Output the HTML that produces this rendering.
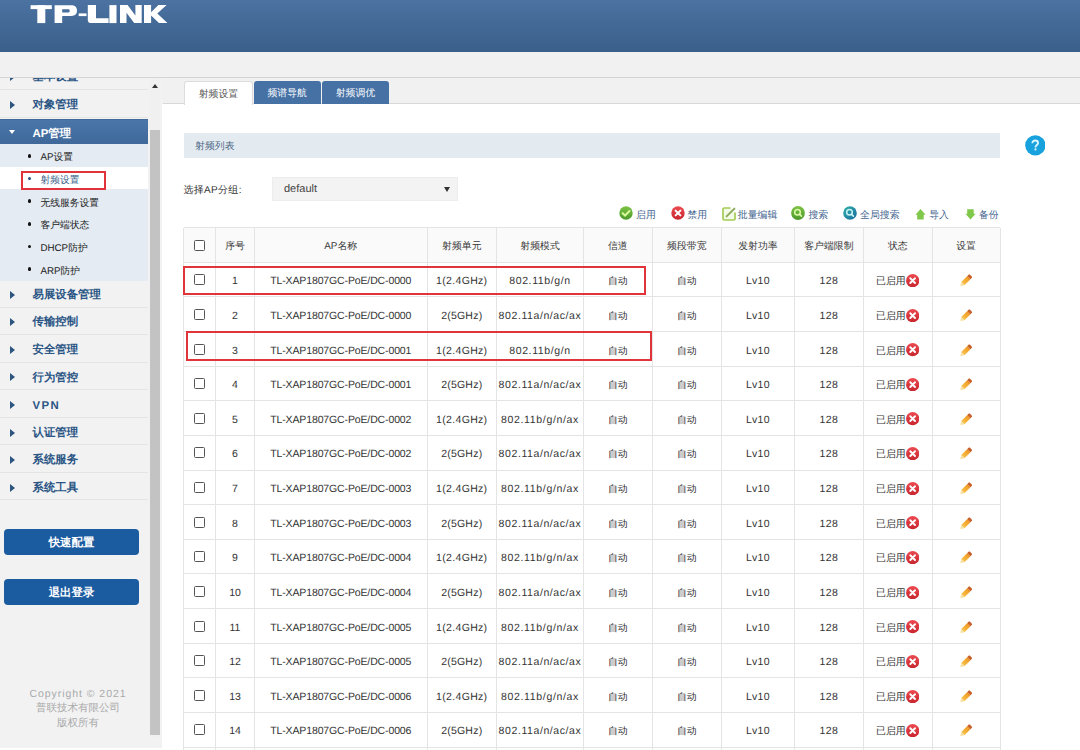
<!DOCTYPE html><html><head><meta charset="utf-8"><style>
*{margin:0;padding:0;box-sizing:border-box}
html,body{width:1080px;height:750px;overflow:hidden;background:#fff;font-family:"Liberation Sans",sans-serif;position:relative;text-rendering:geometricPrecision}
.abs{position:absolute}
#hdr{left:0;top:0;width:1080px;height:52px;background:linear-gradient(#4b72a1,#3a5f8a)}
#band{left:0;top:52px;width:1080px;height:26px;background:#f1f1f1;border-bottom:1px solid #d4d4d4}
#side{left:0;top:78px;width:163px;height:670px;background:#f2f2f3;overflow:hidden}
.mi{position:absolute;left:0;width:148px;height:27.6px;border-bottom:1px solid #e4e4e6;color:#2a5584;font-weight:bold;font-size:11.4px}
.mi .t{position:absolute;left:32.5px;top:50%;margin-top:1.5px;transform:translateY(-44%);white-space:nowrap}
.mi .tri{position:absolute;left:10px;top:50%;margin-top:-2.7px;width:0;height:0;border-left:5.2px solid #2c557f;border-top:4.2px solid transparent;border-bottom:4.2px solid transparent}
.mi.act{background:linear-gradient(#4a76aa,#3f6899);color:#fff;border-top:1px solid #41699a;border-bottom:none}
.mi.act .tri{left:8.5px;margin-top:-2px;border-top:4px solid #fff;border-left:3.7px solid transparent;border-right:3.7px solid transparent;border-bottom:none}
#sub{left:0;top:66px;width:148px;height:137px;background:#e4ebf2}
.si{position:absolute;left:0;width:148px;height:22.65px;font-size:9.75px;color:#222}
.si .b{position:absolute;left:27.8px;top:50%;margin-top:-1.3px;width:3.6px;height:3.6px;background:#111;border-radius:50%}
.si .t{position:absolute;left:40.5px;top:50%;margin-top:1px;transform:translateY(-41%);white-space:nowrap}
.si.cur{background:#fff;color:#3a5f8a}
.si.cur .b{background:#2a4f7a}
#sbtrack{left:150px;top:0;width:10px;height:660px;background:#f0f0f0}
#sbthumb{left:150px;top:51.5px;width:10px;height:605.5px;background:#c3c3c3}
#sbup{left:152px;top:5.5px;width:0;height:0;border-bottom:4px solid #333;border-left:3.5px solid transparent;border-right:3.5px solid transparent}
.btn{position:absolute;left:4px;width:135px;height:25.6px;background:#1b5b9f;border-radius:4px;color:#fff;font-weight:bold;font-size:11.4px;text-align:center;line-height:25.6px;padding-top:1.8px}
#copy{left:0;top:608px;width:156px;text-align:center;color:#a9a9a9;font-size:10.5px;line-height:15px}
#copy .en{letter-spacing:0.95px;position:relative;top:1px}
#tabbar{left:163px;top:78px;width:917px;height:25.5px;background:#f1f1f1;border-bottom:1px solid #d8d8d8}
.tab{position:absolute;top:81px;height:22.5px;border-radius:3px 3px 0 0;font-size:9.9px;text-align:center;line-height:25px;color:#fff;background:#4571a5}
.tab.on{background:#fff;color:#555;border:1px solid #dcdcdc;border-bottom:none;height:23.5px}
#content{left:162px;top:103.5px;width:918px;height:647px;background:#fff}
#sec{left:183.5px;top:132.7px;width:816.5px;height:25.6px;background:#e3ebf1;color:#4d6785;font-size:9.9px;line-height:27.6px;padding-left:11.5px}
#lbl{left:183.5px;top:183px;font-size:10px;letter-spacing:0.3px;color:#333}
#sel{left:272px;top:177.4px;width:186.4px;height:24.1px;background:#f3f3f3;border:1px solid #ededed}
#sel .t{position:absolute;left:11px;top:5px;font-size:11px;color:#444}
#sel .arr{position:absolute;left:170.5px;top:9px;width:0;height:0;border-top:5.5px solid #333;border-left:3.6px solid transparent;border-right:3.6px solid transparent}
.tb{position:absolute;top:207.8px;font-size:9.9px;color:#44658f;white-space:nowrap}
#help{left:1024.7px;top:134.9px;width:20.7px;height:20.7px;border-radius:50%;background:#1b9ad8;color:#fff;font-weight:bold;font-size:14px;text-align:center;line-height:21px}
.hl{position:absolute;background:#e4e4e4;height:1px}
.vl{position:absolute;background:#e4e4e4;width:1px}
.cell{position:absolute;text-align:center;white-space:nowrap;font-size:10.5px;color:#333;padding-top:2px}
.hc{font-size:9.9px;color:#383838;padding-top:2.8px}
.zh{font-size:9.9px}
.cb{position:absolute;width:11px;height:11px;border:1.4px solid #555;border-radius:1.5px;background:#fff}
.red{position:absolute;border:2px solid #e0343a}
</style></head><body>
<div id="hdr" class="abs"></div>
<svg class="abs" style="left:0;top:0" width="200" height="30" viewBox="0 0 200 30"><g fill="#fff"><rect x="30.6" y="5.2" width="21.2" height="3.9"/><rect x="37.3" y="5.2" width="8" height="17.9"/><path fill-rule="evenodd" d="M54.6 5.2H71.5C75.2 5.2 77 7.3 77 10.6C77 13.9 75.2 16 71.5 16H62.2V23.1H54.6ZM62.2 9.2V12.5H68.3C69.3 12.5 69.7 11.9 69.7 10.85C69.7 9.8 69.3 9.2 68.3 9.2Z"/><rect x="78.7" y="13.4" width="7.8" height="2.7"/><path d="M87.8 5.1H96V18.3H108.6V23.1H91C89 23.1 87.8 22 87.8 20Z"/><rect x="109.4" y="5.1" width="7.1" height="18"/><path d="M120 5.1H127.6L135.4 15.5V5.1H141.7V23.1H134.2L126.5 12.8V23.1H120Z"/><path d="M144 5.1H151.1V12.2L158.4 5.1H166.6L157.3 13.6L167.4 23.1H159L151.1 15.6V23.1H144Z"/></g></svg>
<div id="band" class="abs"></div>
<div id="side" class="abs">
<div class="mi" style="top:-15.5px"><span class="tri"></span><span class="t">基本设置</span></div>
<div class="mi" style="top:12.5px"><span class="tri"></span><span class="t">对象管理</span></div>
<div class="mi act" style="top:40.8px;height:26px"><span class="tri"></span><span class="t">AP管理</span></div>
<div id="sub" class="abs">
<div class="si" style="top:0.0px"><span class="b"></span><span class="t">AP设置</span></div>
<div class="si cur" style="top:22.6px"><span class="b"></span><span class="t">射频设置</span></div>
<div class="si" style="top:45.3px"><span class="b"></span><span class="t">无线服务设置</span></div>
<div class="si" style="top:67.9px"><span class="b"></span><span class="t">客户端状态</span></div>
<div class="si" style="top:90.6px"><span class="b"></span><span class="t">DHCP防护</span></div>
<div class="si" style="top:113.2px"><span class="b"></span><span class="t">ARP防护</span></div>
</div>
<div class="mi" style="top:202.2px"><span class="tri"></span><span class="t">易展设备管理</span></div>
<div class="mi" style="top:229.7px"><span class="tri"></span><span class="t">传输控制</span></div>
<div class="mi" style="top:257.3px"><span class="tri"></span><span class="t">安全管理</span></div>
<div class="mi" style="top:284.8px"><span class="tri"></span><span class="t">行为管控</span></div>
<div class="mi" style="top:312.3px"><span class="tri"></span><span class="t"><span style="letter-spacing:1.4px">VPN</span></span></div>
<div class="mi" style="top:339.9px"><span class="tri"></span><span class="t">认证管理</span></div>
<div class="mi" style="top:367.4px"><span class="tri"></span><span class="t">系统服务</span></div>
<div class="mi" style="top:394.9px"><span class="tri"></span><span class="t">系统工具</span></div>
<div class="btn" style="top:451.4px">快速配置</div>
<div class="btn" style="top:501.4px">退出登录</div>
<div id="copy" class="abs"><span class="en">Copyright © 2021</span><br>普联技术有限公司<br>版权所有</div>
<div id="sbtrack" class="abs"></div><div id="sbthumb" class="abs"></div><div id="sbup" class="abs"></div>
</div>
<div class="red" style="left:20.6px;top:171px;width:85.8px;height:19.3px"></div>
<div id="tabbar" class="abs"></div>
<div id="content" class="abs"></div>
<div class="tab on" style="left:183.9px;width:69px">射频设置</div>
<div class="tab" style="left:253.9px;width:66.7px">频谱导航</div>
<div class="tab" style="left:322px;width:66.8px">射频调优</div>
<div id="sec" class="abs">射频列表</div>
<div id="lbl" class="abs">选择AP分组:</div>
<div id="sel" class="abs"><span class="t">default</span><span class="arr"></span></div>
<svg class="abs" style="left:1024.7px;top:134.9px" width="20.7" height="20.7" viewBox="0 0 20.7 20.7"><circle cx="10.35" cy="10.35" r="10.2" fill="#18a2dd"/><path d="M7.4 8.2C7.4 6.4 8.6 5.5 10.2 5.5C11.9 5.5 13.1 6.5 13.1 8C13.1 9.9 10.5 10.2 10.5 12.2V12.6" stroke="#d8f4ff" stroke-width="1.9" fill="none"/><circle cx="10.5" cy="14.4" r="1.1" fill="#d8f4ff"/></svg>
<svg class="abs" width="0" height="0" style="left:0;top:0"><defs><linearGradient id="gG" x1="0" y1="0" x2="0" y2="1"><stop offset="0" stop-color="#7cc243"/><stop offset="1" stop-color="#4c9a2c"/></linearGradient><linearGradient id="gR" x1="0" y1="0" x2="0" y2="1"><stop offset="0" stop-color="#ec4a50"/><stop offset="1" stop-color="#c8262e"/></linearGradient><linearGradient id="gB" x1="0" y1="0" x2="1" y2="1"><stop offset="0" stop-color="#2fb0a8"/><stop offset="1" stop-color="#1a6aa0"/></linearGradient><linearGradient id="gP" x1="0" y1="1" x2="1" y2="0"><stop offset="0" stop-color="#f9d25a"/><stop offset="0.7" stop-color="#f2a22a"/><stop offset="1" stop-color="#d5702a"/></linearGradient></defs></svg>
<svg class="abs" style="left:618.6px;top:206px" width="14" height="14" viewBox="0 0 14 14"><circle cx="7" cy="7" r="6.7" fill="url(#gG)"/><path d="M3.6 7.2l2.5 2.4 4.4-4.6" stroke="#d6f79a" stroke-width="2.1" fill="none" stroke-linecap="round"/></svg>
<svg class="abs" style="left:670.6px;top:205.8px" width="14" height="14" viewBox="0 0 14 14"><circle cx="7" cy="7" r="6.7" fill="url(#gR)"/><path d="M4.6 4.6l4.8 4.8M9.4 4.6l-4.8 4.8" stroke="#fff" stroke-width="2" fill="none" stroke-linecap="round"/></svg>
<svg class="abs" style="left:721.5px;top:206.8px" width="14" height="14" viewBox="0 0 14 14"><path d="M8.5 1H2.2C1.5 1 1 1.5 1 2.2V11.8C1 12.5 1.5 13 2.2 13H11.8C12.5 13 13 12.5 13 11.8V5.5" stroke="#a3cc55" stroke-width="1.7" fill="#f3fae6"/><path d="M4.6 9.4L12.4 1.6" stroke="#8aa85a" stroke-width="1.9" stroke-linecap="round"/></svg>
<svg class="abs" style="left:790.8px;top:205.5px" width="14" height="14" viewBox="0 0 14 14"><circle cx="7" cy="7" r="6.9" fill="url(#gG)"/><circle cx="6.5" cy="6.2" r="2.8" stroke="#dcf8a8" stroke-width="1.5" fill="none"/><path d="M8.4 8.2l2 2" stroke="#dcf8a8" stroke-width="1.7" stroke-linecap="round"/></svg>
<svg class="abs" style="left:842.5px;top:205.6px" width="14" height="14" viewBox="0 0 14 14"><circle cx="7" cy="7" r="6.8" fill="url(#gB)"/><circle cx="6.5" cy="6.2" r="2.8" stroke="#c8f4f4" stroke-width="1.5" fill="none"/><path d="M8.4 8.2l2 2" stroke="#c8f4f4" stroke-width="1.7" stroke-linecap="round"/></svg>
<svg class="abs" style="left:914.8px;top:208.5px" width="11" height="11" viewBox="0 0 11 11"><path d="M5.5 0.1L10.6 5.8H8.7V10.4H2.2V5.8H0.5z" fill="#80c84a"/></svg>
<svg class="abs" style="left:964.5px;top:208.6px" width="11" height="11" viewBox="0 0 11 11"><path d="M5.5 10.5L10.6 4.8H8.7V0.2H2.2V4.8H0.5z" fill="#80c84a"/></svg>
<div class="tb" style="left:636.0px">启用</div>
<div class="tb" style="left:687.4px">禁用</div>
<div class="tb" style="left:737.8px">批量编辑</div>
<div class="tb" style="left:808.4px">搜索</div>
<div class="tb" style="left:860.0px">全局搜索</div>
<div class="tb" style="left:929.2px">导入</div>
<div class="tb" style="left:978.9px">备份</div>
<div class="abs" style="left:183.5px;top:227.5px;width:816.5px;height:34.7px;background:#fafafa"></div>
<div class="hl" style="left:183.5px;top:227.0px;width:816.5px"></div>
<div class="hl" style="left:183.5px;top:261.7px;width:816.5px"></div>
<div class="hl" style="left:183.5px;top:296.3px;width:816.5px"></div>
<div class="hl" style="left:183.5px;top:331.0px;width:816.5px"></div>
<div class="hl" style="left:183.5px;top:365.6px;width:816.5px"></div>
<div class="hl" style="left:183.5px;top:400.2px;width:816.5px"></div>
<div class="hl" style="left:183.5px;top:434.9px;width:816.5px"></div>
<div class="hl" style="left:183.5px;top:469.5px;width:816.5px"></div>
<div class="hl" style="left:183.5px;top:504.1px;width:816.5px"></div>
<div class="hl" style="left:183.5px;top:538.7px;width:816.5px"></div>
<div class="hl" style="left:183.5px;top:573.4px;width:816.5px"></div>
<div class="hl" style="left:183.5px;top:608.0px;width:816.5px"></div>
<div class="hl" style="left:183.5px;top:642.6px;width:816.5px"></div>
<div class="hl" style="left:183.5px;top:677.3px;width:816.5px"></div>
<div class="hl" style="left:183.5px;top:711.9px;width:816.5px"></div>
<div class="hl" style="left:183.5px;top:746.5px;width:816.5px"></div>
<div class="vl" style="left:183.0px;top:227.5px;height:524.5px"></div>
<div class="vl" style="left:215.0px;top:227.5px;height:524.5px"></div>
<div class="vl" style="left:254.0px;top:227.5px;height:524.5px"></div>
<div class="vl" style="left:426.5px;top:227.5px;height:524.5px"></div>
<div class="vl" style="left:496.0px;top:227.5px;height:524.5px"></div>
<div class="vl" style="left:583.0px;top:227.5px;height:524.5px"></div>
<div class="vl" style="left:651.5px;top:227.5px;height:524.5px"></div>
<div class="vl" style="left:721.0px;top:227.5px;height:524.5px"></div>
<div class="vl" style="left:793.8px;top:227.5px;height:524.5px"></div>
<div class="vl" style="left:863.0px;top:227.5px;height:524.5px"></div>
<div class="vl" style="left:931.5px;top:227.5px;height:524.5px"></div>
<div class="vl" style="left:999.5px;top:227.5px;height:524.5px"></div>
<div class="cb" style="left:194.0px;top:239.5px"></div>
<div class="cell hc" style="left:215.5px;top:227.5px;width:39.0px;height:34.7px;line-height:34.7px">序号</div>
<div class="cell hc" style="left:254.5px;top:227.5px;width:172.5px;height:34.7px;line-height:34.7px">AP名称</div>
<div class="cell hc" style="left:427.0px;top:227.5px;width:69.5px;height:34.7px;line-height:34.7px">射频单元</div>
<div class="cell hc" style="left:496.5px;top:227.5px;width:87.0px;height:34.7px;line-height:34.7px">射频模式</div>
<div class="cell hc" style="left:583.5px;top:227.5px;width:68.5px;height:34.7px;line-height:34.7px">信道</div>
<div class="cell hc" style="left:652.0px;top:227.5px;width:69.5px;height:34.7px;line-height:34.7px">频段带宽</div>
<div class="cell hc" style="left:721.5px;top:227.5px;width:72.8px;height:34.7px;line-height:34.7px">发射功率</div>
<div class="cell hc" style="left:794.3px;top:227.5px;width:69.2px;height:34.7px;line-height:34.7px">客户端限制</div>
<div class="cell hc" style="left:863.5px;top:227.5px;width:68.5px;height:34.7px;line-height:34.7px">状态</div>
<div class="cell hc" style="left:932.0px;top:227.5px;width:68.0px;height:34.7px;line-height:34.7px">设置</div>
<div class="cb" style="left:194.0px;top:274.2px"></div>
<div class="cell" style="left:215.5px;top:262.2px;width:39.0px;height:34.6px;line-height:34.6px">1</div>
<div class="cell" style="left:254.5px;top:262.2px;width:172.5px;height:34.6px;line-height:34.6px"><span style="letter-spacing:-0.13px">TL-XAP1807GC-PoE/DC-0000</span></div>
<div class="cell" style="left:427.0px;top:262.2px;width:69.5px;height:34.6px;line-height:34.6px"><span style="letter-spacing:0.33px">1(2.4GHz)</span></div>
<div class="cell" style="left:496.5px;top:262.2px;width:87.0px;height:34.6px;line-height:34.6px"><span style="letter-spacing:0.63px">802.11b/g/n</span></div>
<div class="cell" style="left:583.5px;top:262.2px;width:68.5px;height:34.6px;line-height:34.6px"><span class="zh">自动</span></div>
<div class="cell" style="left:652.0px;top:262.2px;width:69.5px;height:34.6px;line-height:34.6px"><span class="zh">自动</span></div>
<div class="cell" style="left:721.5px;top:262.2px;width:72.8px;height:34.6px;line-height:34.6px"><span style="letter-spacing:0.27px">Lv10</span></div>
<div class="cell" style="left:794.3px;top:262.2px;width:69.2px;height:34.6px;line-height:34.6px"><span style="letter-spacing:0.40px">128</span></div>
<div class="cell" style="left:863.5px;top:262.2px;width:68.5px;height:34.6px;line-height:34.6px"><span class="zh">已启用</span><svg width="13.3" height="13.3" viewBox="0 0 14 14" style="vertical-align:-3px;margin-left:0.5px"><circle cx="7" cy="7" r="7" fill="url(#gR)"/><path d="M4.5 4.5l5 5M9.5 4.5l-5 5" stroke="#fff" stroke-width="2" stroke-linecap="round"/></svg></div>
<div class="cell" style="left:932.0px;top:262.2px;width:68.0px;height:34.6px;line-height:34.6px"><svg width="13" height="13" viewBox="0 0 13 13" style="vertical-align:-3px;margin-left:-2px"><path d="M1.5 11.8l1-4 5.8-5.8 3.2 3.2-5.8 5.8z" fill="url(#gP)"/><path d="M8.3 2l1.2-1.2c0.5-0.5 1.1-0.5 1.6 0l1.6 1.6c0.5 0.5 0.5 1.1 0 1.6l-1.2 1.2z" fill="#c8602a"/><path d="M1.5 11.8l1-4 3 3z" fill="#f8e0a8"/></svg></div>
<div class="cb" style="left:194.0px;top:308.8px"></div>
<div class="cell" style="left:215.5px;top:296.8px;width:39.0px;height:34.6px;line-height:34.6px">2</div>
<div class="cell" style="left:254.5px;top:296.8px;width:172.5px;height:34.6px;line-height:34.6px"><span style="letter-spacing:-0.13px">TL-XAP1807GC-PoE/DC-0000</span></div>
<div class="cell" style="left:427.0px;top:296.8px;width:69.5px;height:34.6px;line-height:34.6px"><span style="letter-spacing:0.22px">2(5GHz)</span></div>
<div class="cell" style="left:496.5px;top:296.8px;width:87.0px;height:34.6px;line-height:34.6px"><span style="letter-spacing:0.59px">802.11a/n/ac/ax</span></div>
<div class="cell" style="left:583.5px;top:296.8px;width:68.5px;height:34.6px;line-height:34.6px"><span class="zh">自动</span></div>
<div class="cell" style="left:652.0px;top:296.8px;width:69.5px;height:34.6px;line-height:34.6px"><span class="zh">自动</span></div>
<div class="cell" style="left:721.5px;top:296.8px;width:72.8px;height:34.6px;line-height:34.6px"><span style="letter-spacing:0.27px">Lv10</span></div>
<div class="cell" style="left:794.3px;top:296.8px;width:69.2px;height:34.6px;line-height:34.6px"><span style="letter-spacing:0.40px">128</span></div>
<div class="cell" style="left:863.5px;top:296.8px;width:68.5px;height:34.6px;line-height:34.6px"><span class="zh">已启用</span><svg width="13.3" height="13.3" viewBox="0 0 14 14" style="vertical-align:-3px;margin-left:0.5px"><circle cx="7" cy="7" r="7" fill="url(#gR)"/><path d="M4.5 4.5l5 5M9.5 4.5l-5 5" stroke="#fff" stroke-width="2" stroke-linecap="round"/></svg></div>
<div class="cell" style="left:932.0px;top:296.8px;width:68.0px;height:34.6px;line-height:34.6px"><svg width="13" height="13" viewBox="0 0 13 13" style="vertical-align:-3px;margin-left:-2px"><path d="M1.5 11.8l1-4 5.8-5.8 3.2 3.2-5.8 5.8z" fill="url(#gP)"/><path d="M8.3 2l1.2-1.2c0.5-0.5 1.1-0.5 1.6 0l1.6 1.6c0.5 0.5 0.5 1.1 0 1.6l-1.2 1.2z" fill="#c8602a"/><path d="M1.5 11.8l1-4 3 3z" fill="#f8e0a8"/></svg></div>
<div class="cb" style="left:194.0px;top:343.5px"></div>
<div class="cell" style="left:215.5px;top:331.5px;width:39.0px;height:34.6px;line-height:34.6px">3</div>
<div class="cell" style="left:254.5px;top:331.5px;width:172.5px;height:34.6px;line-height:34.6px"><span style="letter-spacing:-0.13px">TL-XAP1807GC-PoE/DC-0001</span></div>
<div class="cell" style="left:427.0px;top:331.5px;width:69.5px;height:34.6px;line-height:34.6px"><span style="letter-spacing:0.33px">1(2.4GHz)</span></div>
<div class="cell" style="left:496.5px;top:331.5px;width:87.0px;height:34.6px;line-height:34.6px"><span style="letter-spacing:0.63px">802.11b/g/n</span></div>
<div class="cell" style="left:583.5px;top:331.5px;width:68.5px;height:34.6px;line-height:34.6px"><span class="zh">自动</span></div>
<div class="cell" style="left:652.0px;top:331.5px;width:69.5px;height:34.6px;line-height:34.6px"><span class="zh">自动</span></div>
<div class="cell" style="left:721.5px;top:331.5px;width:72.8px;height:34.6px;line-height:34.6px"><span style="letter-spacing:0.27px">Lv10</span></div>
<div class="cell" style="left:794.3px;top:331.5px;width:69.2px;height:34.6px;line-height:34.6px"><span style="letter-spacing:0.40px">128</span></div>
<div class="cell" style="left:863.5px;top:331.5px;width:68.5px;height:34.6px;line-height:34.6px"><span class="zh">已启用</span><svg width="13.3" height="13.3" viewBox="0 0 14 14" style="vertical-align:-3px;margin-left:0.5px"><circle cx="7" cy="7" r="7" fill="url(#gR)"/><path d="M4.5 4.5l5 5M9.5 4.5l-5 5" stroke="#fff" stroke-width="2" stroke-linecap="round"/></svg></div>
<div class="cell" style="left:932.0px;top:331.5px;width:68.0px;height:34.6px;line-height:34.6px"><svg width="13" height="13" viewBox="0 0 13 13" style="vertical-align:-3px;margin-left:-2px"><path d="M1.5 11.8l1-4 5.8-5.8 3.2 3.2-5.8 5.8z" fill="url(#gP)"/><path d="M8.3 2l1.2-1.2c0.5-0.5 1.1-0.5 1.6 0l1.6 1.6c0.5 0.5 0.5 1.1 0 1.6l-1.2 1.2z" fill="#c8602a"/><path d="M1.5 11.8l1-4 3 3z" fill="#f8e0a8"/></svg></div>
<div class="cb" style="left:194.0px;top:378.1px"></div>
<div class="cell" style="left:215.5px;top:366.1px;width:39.0px;height:34.6px;line-height:34.6px">4</div>
<div class="cell" style="left:254.5px;top:366.1px;width:172.5px;height:34.6px;line-height:34.6px"><span style="letter-spacing:-0.13px">TL-XAP1807GC-PoE/DC-0001</span></div>
<div class="cell" style="left:427.0px;top:366.1px;width:69.5px;height:34.6px;line-height:34.6px"><span style="letter-spacing:0.22px">2(5GHz)</span></div>
<div class="cell" style="left:496.5px;top:366.1px;width:87.0px;height:34.6px;line-height:34.6px"><span style="letter-spacing:0.59px">802.11a/n/ac/ax</span></div>
<div class="cell" style="left:583.5px;top:366.1px;width:68.5px;height:34.6px;line-height:34.6px"><span class="zh">自动</span></div>
<div class="cell" style="left:652.0px;top:366.1px;width:69.5px;height:34.6px;line-height:34.6px"><span class="zh">自动</span></div>
<div class="cell" style="left:721.5px;top:366.1px;width:72.8px;height:34.6px;line-height:34.6px"><span style="letter-spacing:0.27px">Lv10</span></div>
<div class="cell" style="left:794.3px;top:366.1px;width:69.2px;height:34.6px;line-height:34.6px"><span style="letter-spacing:0.40px">128</span></div>
<div class="cell" style="left:863.5px;top:366.1px;width:68.5px;height:34.6px;line-height:34.6px"><span class="zh">已启用</span><svg width="13.3" height="13.3" viewBox="0 0 14 14" style="vertical-align:-3px;margin-left:0.5px"><circle cx="7" cy="7" r="7" fill="url(#gR)"/><path d="M4.5 4.5l5 5M9.5 4.5l-5 5" stroke="#fff" stroke-width="2" stroke-linecap="round"/></svg></div>
<div class="cell" style="left:932.0px;top:366.1px;width:68.0px;height:34.6px;line-height:34.6px"><svg width="13" height="13" viewBox="0 0 13 13" style="vertical-align:-3px;margin-left:-2px"><path d="M1.5 11.8l1-4 5.8-5.8 3.2 3.2-5.8 5.8z" fill="url(#gP)"/><path d="M8.3 2l1.2-1.2c0.5-0.5 1.1-0.5 1.6 0l1.6 1.6c0.5 0.5 0.5 1.1 0 1.6l-1.2 1.2z" fill="#c8602a"/><path d="M1.5 11.8l1-4 3 3z" fill="#f8e0a8"/></svg></div>
<div class="cb" style="left:194.0px;top:412.7px"></div>
<div class="cell" style="left:215.5px;top:400.7px;width:39.0px;height:34.6px;line-height:34.6px">5</div>
<div class="cell" style="left:254.5px;top:400.7px;width:172.5px;height:34.6px;line-height:34.6px"><span style="letter-spacing:-0.13px">TL-XAP1807GC-PoE/DC-0002</span></div>
<div class="cell" style="left:427.0px;top:400.7px;width:69.5px;height:34.6px;line-height:34.6px"><span style="letter-spacing:0.33px">1(2.4GHz)</span></div>
<div class="cell" style="left:496.5px;top:400.7px;width:87.0px;height:34.6px;line-height:34.6px"><span style="letter-spacing:0.66px">802.11b/g/n/ax</span></div>
<div class="cell" style="left:583.5px;top:400.7px;width:68.5px;height:34.6px;line-height:34.6px"><span class="zh">自动</span></div>
<div class="cell" style="left:652.0px;top:400.7px;width:69.5px;height:34.6px;line-height:34.6px"><span class="zh">自动</span></div>
<div class="cell" style="left:721.5px;top:400.7px;width:72.8px;height:34.6px;line-height:34.6px"><span style="letter-spacing:0.27px">Lv10</span></div>
<div class="cell" style="left:794.3px;top:400.7px;width:69.2px;height:34.6px;line-height:34.6px"><span style="letter-spacing:0.40px">128</span></div>
<div class="cell" style="left:863.5px;top:400.7px;width:68.5px;height:34.6px;line-height:34.6px"><span class="zh">已启用</span><svg width="13.3" height="13.3" viewBox="0 0 14 14" style="vertical-align:-3px;margin-left:0.5px"><circle cx="7" cy="7" r="7" fill="url(#gR)"/><path d="M4.5 4.5l5 5M9.5 4.5l-5 5" stroke="#fff" stroke-width="2" stroke-linecap="round"/></svg></div>
<div class="cell" style="left:932.0px;top:400.7px;width:68.0px;height:34.6px;line-height:34.6px"><svg width="13" height="13" viewBox="0 0 13 13" style="vertical-align:-3px;margin-left:-2px"><path d="M1.5 11.8l1-4 5.8-5.8 3.2 3.2-5.8 5.8z" fill="url(#gP)"/><path d="M8.3 2l1.2-1.2c0.5-0.5 1.1-0.5 1.6 0l1.6 1.6c0.5 0.5 0.5 1.1 0 1.6l-1.2 1.2z" fill="#c8602a"/><path d="M1.5 11.8l1-4 3 3z" fill="#f8e0a8"/></svg></div>
<div class="cb" style="left:194.0px;top:447.4px"></div>
<div class="cell" style="left:215.5px;top:435.4px;width:39.0px;height:34.6px;line-height:34.6px">6</div>
<div class="cell" style="left:254.5px;top:435.4px;width:172.5px;height:34.6px;line-height:34.6px"><span style="letter-spacing:-0.13px">TL-XAP1807GC-PoE/DC-0002</span></div>
<div class="cell" style="left:427.0px;top:435.4px;width:69.5px;height:34.6px;line-height:34.6px"><span style="letter-spacing:0.22px">2(5GHz)</span></div>
<div class="cell" style="left:496.5px;top:435.4px;width:87.0px;height:34.6px;line-height:34.6px"><span style="letter-spacing:0.59px">802.11a/n/ac/ax</span></div>
<div class="cell" style="left:583.5px;top:435.4px;width:68.5px;height:34.6px;line-height:34.6px"><span class="zh">自动</span></div>
<div class="cell" style="left:652.0px;top:435.4px;width:69.5px;height:34.6px;line-height:34.6px"><span class="zh">自动</span></div>
<div class="cell" style="left:721.5px;top:435.4px;width:72.8px;height:34.6px;line-height:34.6px"><span style="letter-spacing:0.27px">Lv10</span></div>
<div class="cell" style="left:794.3px;top:435.4px;width:69.2px;height:34.6px;line-height:34.6px"><span style="letter-spacing:0.40px">128</span></div>
<div class="cell" style="left:863.5px;top:435.4px;width:68.5px;height:34.6px;line-height:34.6px"><span class="zh">已启用</span><svg width="13.3" height="13.3" viewBox="0 0 14 14" style="vertical-align:-3px;margin-left:0.5px"><circle cx="7" cy="7" r="7" fill="url(#gR)"/><path d="M4.5 4.5l5 5M9.5 4.5l-5 5" stroke="#fff" stroke-width="2" stroke-linecap="round"/></svg></div>
<div class="cell" style="left:932.0px;top:435.4px;width:68.0px;height:34.6px;line-height:34.6px"><svg width="13" height="13" viewBox="0 0 13 13" style="vertical-align:-3px;margin-left:-2px"><path d="M1.5 11.8l1-4 5.8-5.8 3.2 3.2-5.8 5.8z" fill="url(#gP)"/><path d="M8.3 2l1.2-1.2c0.5-0.5 1.1-0.5 1.6 0l1.6 1.6c0.5 0.5 0.5 1.1 0 1.6l-1.2 1.2z" fill="#c8602a"/><path d="M1.5 11.8l1-4 3 3z" fill="#f8e0a8"/></svg></div>
<div class="cb" style="left:194.0px;top:482.0px"></div>
<div class="cell" style="left:215.5px;top:470.0px;width:39.0px;height:34.6px;line-height:34.6px">7</div>
<div class="cell" style="left:254.5px;top:470.0px;width:172.5px;height:34.6px;line-height:34.6px"><span style="letter-spacing:-0.13px">TL-XAP1807GC-PoE/DC-0003</span></div>
<div class="cell" style="left:427.0px;top:470.0px;width:69.5px;height:34.6px;line-height:34.6px"><span style="letter-spacing:0.33px">1(2.4GHz)</span></div>
<div class="cell" style="left:496.5px;top:470.0px;width:87.0px;height:34.6px;line-height:34.6px"><span style="letter-spacing:0.66px">802.11b/g/n/ax</span></div>
<div class="cell" style="left:583.5px;top:470.0px;width:68.5px;height:34.6px;line-height:34.6px"><span class="zh">自动</span></div>
<div class="cell" style="left:652.0px;top:470.0px;width:69.5px;height:34.6px;line-height:34.6px"><span class="zh">自动</span></div>
<div class="cell" style="left:721.5px;top:470.0px;width:72.8px;height:34.6px;line-height:34.6px"><span style="letter-spacing:0.27px">Lv10</span></div>
<div class="cell" style="left:794.3px;top:470.0px;width:69.2px;height:34.6px;line-height:34.6px"><span style="letter-spacing:0.40px">128</span></div>
<div class="cell" style="left:863.5px;top:470.0px;width:68.5px;height:34.6px;line-height:34.6px"><span class="zh">已启用</span><svg width="13.3" height="13.3" viewBox="0 0 14 14" style="vertical-align:-3px;margin-left:0.5px"><circle cx="7" cy="7" r="7" fill="url(#gR)"/><path d="M4.5 4.5l5 5M9.5 4.5l-5 5" stroke="#fff" stroke-width="2" stroke-linecap="round"/></svg></div>
<div class="cell" style="left:932.0px;top:470.0px;width:68.0px;height:34.6px;line-height:34.6px"><svg width="13" height="13" viewBox="0 0 13 13" style="vertical-align:-3px;margin-left:-2px"><path d="M1.5 11.8l1-4 5.8-5.8 3.2 3.2-5.8 5.8z" fill="url(#gP)"/><path d="M8.3 2l1.2-1.2c0.5-0.5 1.1-0.5 1.6 0l1.6 1.6c0.5 0.5 0.5 1.1 0 1.6l-1.2 1.2z" fill="#c8602a"/><path d="M1.5 11.8l1-4 3 3z" fill="#f8e0a8"/></svg></div>
<div class="cb" style="left:194.0px;top:516.6px"></div>
<div class="cell" style="left:215.5px;top:504.6px;width:39.0px;height:34.6px;line-height:34.6px">8</div>
<div class="cell" style="left:254.5px;top:504.6px;width:172.5px;height:34.6px;line-height:34.6px"><span style="letter-spacing:-0.13px">TL-XAP1807GC-PoE/DC-0003</span></div>
<div class="cell" style="left:427.0px;top:504.6px;width:69.5px;height:34.6px;line-height:34.6px"><span style="letter-spacing:0.22px">2(5GHz)</span></div>
<div class="cell" style="left:496.5px;top:504.6px;width:87.0px;height:34.6px;line-height:34.6px"><span style="letter-spacing:0.59px">802.11a/n/ac/ax</span></div>
<div class="cell" style="left:583.5px;top:504.6px;width:68.5px;height:34.6px;line-height:34.6px"><span class="zh">自动</span></div>
<div class="cell" style="left:652.0px;top:504.6px;width:69.5px;height:34.6px;line-height:34.6px"><span class="zh">自动</span></div>
<div class="cell" style="left:721.5px;top:504.6px;width:72.8px;height:34.6px;line-height:34.6px"><span style="letter-spacing:0.27px">Lv10</span></div>
<div class="cell" style="left:794.3px;top:504.6px;width:69.2px;height:34.6px;line-height:34.6px"><span style="letter-spacing:0.40px">128</span></div>
<div class="cell" style="left:863.5px;top:504.6px;width:68.5px;height:34.6px;line-height:34.6px"><span class="zh">已启用</span><svg width="13.3" height="13.3" viewBox="0 0 14 14" style="vertical-align:-3px;margin-left:0.5px"><circle cx="7" cy="7" r="7" fill="url(#gR)"/><path d="M4.5 4.5l5 5M9.5 4.5l-5 5" stroke="#fff" stroke-width="2" stroke-linecap="round"/></svg></div>
<div class="cell" style="left:932.0px;top:504.6px;width:68.0px;height:34.6px;line-height:34.6px"><svg width="13" height="13" viewBox="0 0 13 13" style="vertical-align:-3px;margin-left:-2px"><path d="M1.5 11.8l1-4 5.8-5.8 3.2 3.2-5.8 5.8z" fill="url(#gP)"/><path d="M8.3 2l1.2-1.2c0.5-0.5 1.1-0.5 1.6 0l1.6 1.6c0.5 0.5 0.5 1.1 0 1.6l-1.2 1.2z" fill="#c8602a"/><path d="M1.5 11.8l1-4 3 3z" fill="#f8e0a8"/></svg></div>
<div class="cb" style="left:194.0px;top:551.2px"></div>
<div class="cell" style="left:215.5px;top:539.2px;width:39.0px;height:34.6px;line-height:34.6px">9</div>
<div class="cell" style="left:254.5px;top:539.2px;width:172.5px;height:34.6px;line-height:34.6px"><span style="letter-spacing:-0.13px">TL-XAP1807GC-PoE/DC-0004</span></div>
<div class="cell" style="left:427.0px;top:539.2px;width:69.5px;height:34.6px;line-height:34.6px"><span style="letter-spacing:0.33px">1(2.4GHz)</span></div>
<div class="cell" style="left:496.5px;top:539.2px;width:87.0px;height:34.6px;line-height:34.6px"><span style="letter-spacing:0.66px">802.11b/g/n/ax</span></div>
<div class="cell" style="left:583.5px;top:539.2px;width:68.5px;height:34.6px;line-height:34.6px"><span class="zh">自动</span></div>
<div class="cell" style="left:652.0px;top:539.2px;width:69.5px;height:34.6px;line-height:34.6px"><span class="zh">自动</span></div>
<div class="cell" style="left:721.5px;top:539.2px;width:72.8px;height:34.6px;line-height:34.6px"><span style="letter-spacing:0.27px">Lv10</span></div>
<div class="cell" style="left:794.3px;top:539.2px;width:69.2px;height:34.6px;line-height:34.6px"><span style="letter-spacing:0.40px">128</span></div>
<div class="cell" style="left:863.5px;top:539.2px;width:68.5px;height:34.6px;line-height:34.6px"><span class="zh">已启用</span><svg width="13.3" height="13.3" viewBox="0 0 14 14" style="vertical-align:-3px;margin-left:0.5px"><circle cx="7" cy="7" r="7" fill="url(#gR)"/><path d="M4.5 4.5l5 5M9.5 4.5l-5 5" stroke="#fff" stroke-width="2" stroke-linecap="round"/></svg></div>
<div class="cell" style="left:932.0px;top:539.2px;width:68.0px;height:34.6px;line-height:34.6px"><svg width="13" height="13" viewBox="0 0 13 13" style="vertical-align:-3px;margin-left:-2px"><path d="M1.5 11.8l1-4 5.8-5.8 3.2 3.2-5.8 5.8z" fill="url(#gP)"/><path d="M8.3 2l1.2-1.2c0.5-0.5 1.1-0.5 1.6 0l1.6 1.6c0.5 0.5 0.5 1.1 0 1.6l-1.2 1.2z" fill="#c8602a"/><path d="M1.5 11.8l1-4 3 3z" fill="#f8e0a8"/></svg></div>
<div class="cb" style="left:194.0px;top:585.9px"></div>
<div class="cell" style="left:215.5px;top:573.9px;width:39.0px;height:34.6px;line-height:34.6px">10</div>
<div class="cell" style="left:254.5px;top:573.9px;width:172.5px;height:34.6px;line-height:34.6px"><span style="letter-spacing:-0.13px">TL-XAP1807GC-PoE/DC-0004</span></div>
<div class="cell" style="left:427.0px;top:573.9px;width:69.5px;height:34.6px;line-height:34.6px"><span style="letter-spacing:0.22px">2(5GHz)</span></div>
<div class="cell" style="left:496.5px;top:573.9px;width:87.0px;height:34.6px;line-height:34.6px"><span style="letter-spacing:0.59px">802.11a/n/ac/ax</span></div>
<div class="cell" style="left:583.5px;top:573.9px;width:68.5px;height:34.6px;line-height:34.6px"><span class="zh">自动</span></div>
<div class="cell" style="left:652.0px;top:573.9px;width:69.5px;height:34.6px;line-height:34.6px"><span class="zh">自动</span></div>
<div class="cell" style="left:721.5px;top:573.9px;width:72.8px;height:34.6px;line-height:34.6px"><span style="letter-spacing:0.27px">Lv10</span></div>
<div class="cell" style="left:794.3px;top:573.9px;width:69.2px;height:34.6px;line-height:34.6px"><span style="letter-spacing:0.40px">128</span></div>
<div class="cell" style="left:863.5px;top:573.9px;width:68.5px;height:34.6px;line-height:34.6px"><span class="zh">已启用</span><svg width="13.3" height="13.3" viewBox="0 0 14 14" style="vertical-align:-3px;margin-left:0.5px"><circle cx="7" cy="7" r="7" fill="url(#gR)"/><path d="M4.5 4.5l5 5M9.5 4.5l-5 5" stroke="#fff" stroke-width="2" stroke-linecap="round"/></svg></div>
<div class="cell" style="left:932.0px;top:573.9px;width:68.0px;height:34.6px;line-height:34.6px"><svg width="13" height="13" viewBox="0 0 13 13" style="vertical-align:-3px;margin-left:-2px"><path d="M1.5 11.8l1-4 5.8-5.8 3.2 3.2-5.8 5.8z" fill="url(#gP)"/><path d="M8.3 2l1.2-1.2c0.5-0.5 1.1-0.5 1.6 0l1.6 1.6c0.5 0.5 0.5 1.1 0 1.6l-1.2 1.2z" fill="#c8602a"/><path d="M1.5 11.8l1-4 3 3z" fill="#f8e0a8"/></svg></div>
<div class="cb" style="left:194.0px;top:620.5px"></div>
<div class="cell" style="left:215.5px;top:608.5px;width:39.0px;height:34.6px;line-height:34.6px">11</div>
<div class="cell" style="left:254.5px;top:608.5px;width:172.5px;height:34.6px;line-height:34.6px"><span style="letter-spacing:-0.13px">TL-XAP1807GC-PoE/DC-0005</span></div>
<div class="cell" style="left:427.0px;top:608.5px;width:69.5px;height:34.6px;line-height:34.6px"><span style="letter-spacing:0.33px">1(2.4GHz)</span></div>
<div class="cell" style="left:496.5px;top:608.5px;width:87.0px;height:34.6px;line-height:34.6px"><span style="letter-spacing:0.66px">802.11b/g/n/ax</span></div>
<div class="cell" style="left:583.5px;top:608.5px;width:68.5px;height:34.6px;line-height:34.6px"><span class="zh">自动</span></div>
<div class="cell" style="left:652.0px;top:608.5px;width:69.5px;height:34.6px;line-height:34.6px"><span class="zh">自动</span></div>
<div class="cell" style="left:721.5px;top:608.5px;width:72.8px;height:34.6px;line-height:34.6px"><span style="letter-spacing:0.27px">Lv10</span></div>
<div class="cell" style="left:794.3px;top:608.5px;width:69.2px;height:34.6px;line-height:34.6px"><span style="letter-spacing:0.40px">128</span></div>
<div class="cell" style="left:863.5px;top:608.5px;width:68.5px;height:34.6px;line-height:34.6px"><span class="zh">已启用</span><svg width="13.3" height="13.3" viewBox="0 0 14 14" style="vertical-align:-3px;margin-left:0.5px"><circle cx="7" cy="7" r="7" fill="url(#gR)"/><path d="M4.5 4.5l5 5M9.5 4.5l-5 5" stroke="#fff" stroke-width="2" stroke-linecap="round"/></svg></div>
<div class="cell" style="left:932.0px;top:608.5px;width:68.0px;height:34.6px;line-height:34.6px"><svg width="13" height="13" viewBox="0 0 13 13" style="vertical-align:-3px;margin-left:-2px"><path d="M1.5 11.8l1-4 5.8-5.8 3.2 3.2-5.8 5.8z" fill="url(#gP)"/><path d="M8.3 2l1.2-1.2c0.5-0.5 1.1-0.5 1.6 0l1.6 1.6c0.5 0.5 0.5 1.1 0 1.6l-1.2 1.2z" fill="#c8602a"/><path d="M1.5 11.8l1-4 3 3z" fill="#f8e0a8"/></svg></div>
<div class="cb" style="left:194.0px;top:655.1px"></div>
<div class="cell" style="left:215.5px;top:643.1px;width:39.0px;height:34.6px;line-height:34.6px">12</div>
<div class="cell" style="left:254.5px;top:643.1px;width:172.5px;height:34.6px;line-height:34.6px"><span style="letter-spacing:-0.13px">TL-XAP1807GC-PoE/DC-0005</span></div>
<div class="cell" style="left:427.0px;top:643.1px;width:69.5px;height:34.6px;line-height:34.6px"><span style="letter-spacing:0.22px">2(5GHz)</span></div>
<div class="cell" style="left:496.5px;top:643.1px;width:87.0px;height:34.6px;line-height:34.6px"><span style="letter-spacing:0.59px">802.11a/n/ac/ax</span></div>
<div class="cell" style="left:583.5px;top:643.1px;width:68.5px;height:34.6px;line-height:34.6px"><span class="zh">自动</span></div>
<div class="cell" style="left:652.0px;top:643.1px;width:69.5px;height:34.6px;line-height:34.6px"><span class="zh">自动</span></div>
<div class="cell" style="left:721.5px;top:643.1px;width:72.8px;height:34.6px;line-height:34.6px"><span style="letter-spacing:0.27px">Lv10</span></div>
<div class="cell" style="left:794.3px;top:643.1px;width:69.2px;height:34.6px;line-height:34.6px"><span style="letter-spacing:0.40px">128</span></div>
<div class="cell" style="left:863.5px;top:643.1px;width:68.5px;height:34.6px;line-height:34.6px"><span class="zh">已启用</span><svg width="13.3" height="13.3" viewBox="0 0 14 14" style="vertical-align:-3px;margin-left:0.5px"><circle cx="7" cy="7" r="7" fill="url(#gR)"/><path d="M4.5 4.5l5 5M9.5 4.5l-5 5" stroke="#fff" stroke-width="2" stroke-linecap="round"/></svg></div>
<div class="cell" style="left:932.0px;top:643.1px;width:68.0px;height:34.6px;line-height:34.6px"><svg width="13" height="13" viewBox="0 0 13 13" style="vertical-align:-3px;margin-left:-2px"><path d="M1.5 11.8l1-4 5.8-5.8 3.2 3.2-5.8 5.8z" fill="url(#gP)"/><path d="M8.3 2l1.2-1.2c0.5-0.5 1.1-0.5 1.6 0l1.6 1.6c0.5 0.5 0.5 1.1 0 1.6l-1.2 1.2z" fill="#c8602a"/><path d="M1.5 11.8l1-4 3 3z" fill="#f8e0a8"/></svg></div>
<div class="cb" style="left:194.0px;top:689.8px"></div>
<div class="cell" style="left:215.5px;top:677.8px;width:39.0px;height:34.6px;line-height:34.6px">13</div>
<div class="cell" style="left:254.5px;top:677.8px;width:172.5px;height:34.6px;line-height:34.6px"><span style="letter-spacing:-0.13px">TL-XAP1807GC-PoE/DC-0006</span></div>
<div class="cell" style="left:427.0px;top:677.8px;width:69.5px;height:34.6px;line-height:34.6px"><span style="letter-spacing:0.33px">1(2.4GHz)</span></div>
<div class="cell" style="left:496.5px;top:677.8px;width:87.0px;height:34.6px;line-height:34.6px"><span style="letter-spacing:0.66px">802.11b/g/n/ax</span></div>
<div class="cell" style="left:583.5px;top:677.8px;width:68.5px;height:34.6px;line-height:34.6px"><span class="zh">自动</span></div>
<div class="cell" style="left:652.0px;top:677.8px;width:69.5px;height:34.6px;line-height:34.6px"><span class="zh">自动</span></div>
<div class="cell" style="left:721.5px;top:677.8px;width:72.8px;height:34.6px;line-height:34.6px"><span style="letter-spacing:0.27px">Lv10</span></div>
<div class="cell" style="left:794.3px;top:677.8px;width:69.2px;height:34.6px;line-height:34.6px"><span style="letter-spacing:0.40px">128</span></div>
<div class="cell" style="left:863.5px;top:677.8px;width:68.5px;height:34.6px;line-height:34.6px"><span class="zh">已启用</span><svg width="13.3" height="13.3" viewBox="0 0 14 14" style="vertical-align:-3px;margin-left:0.5px"><circle cx="7" cy="7" r="7" fill="url(#gR)"/><path d="M4.5 4.5l5 5M9.5 4.5l-5 5" stroke="#fff" stroke-width="2" stroke-linecap="round"/></svg></div>
<div class="cell" style="left:932.0px;top:677.8px;width:68.0px;height:34.6px;line-height:34.6px"><svg width="13" height="13" viewBox="0 0 13 13" style="vertical-align:-3px;margin-left:-2px"><path d="M1.5 11.8l1-4 5.8-5.8 3.2 3.2-5.8 5.8z" fill="url(#gP)"/><path d="M8.3 2l1.2-1.2c0.5-0.5 1.1-0.5 1.6 0l1.6 1.6c0.5 0.5 0.5 1.1 0 1.6l-1.2 1.2z" fill="#c8602a"/><path d="M1.5 11.8l1-4 3 3z" fill="#f8e0a8"/></svg></div>
<div class="cb" style="left:194.0px;top:724.4px"></div>
<div class="cell" style="left:215.5px;top:712.4px;width:39.0px;height:34.6px;line-height:34.6px">14</div>
<div class="cell" style="left:254.5px;top:712.4px;width:172.5px;height:34.6px;line-height:34.6px"><span style="letter-spacing:-0.13px">TL-XAP1807GC-PoE/DC-0006</span></div>
<div class="cell" style="left:427.0px;top:712.4px;width:69.5px;height:34.6px;line-height:34.6px"><span style="letter-spacing:0.22px">2(5GHz)</span></div>
<div class="cell" style="left:496.5px;top:712.4px;width:87.0px;height:34.6px;line-height:34.6px"><span style="letter-spacing:0.59px">802.11a/n/ac/ax</span></div>
<div class="cell" style="left:583.5px;top:712.4px;width:68.5px;height:34.6px;line-height:34.6px"><span class="zh">自动</span></div>
<div class="cell" style="left:652.0px;top:712.4px;width:69.5px;height:34.6px;line-height:34.6px"><span class="zh">自动</span></div>
<div class="cell" style="left:721.5px;top:712.4px;width:72.8px;height:34.6px;line-height:34.6px"><span style="letter-spacing:0.27px">Lv10</span></div>
<div class="cell" style="left:794.3px;top:712.4px;width:69.2px;height:34.6px;line-height:34.6px"><span style="letter-spacing:0.40px">128</span></div>
<div class="cell" style="left:863.5px;top:712.4px;width:68.5px;height:34.6px;line-height:34.6px"><span class="zh">已启用</span><svg width="13.3" height="13.3" viewBox="0 0 14 14" style="vertical-align:-3px;margin-left:0.5px"><circle cx="7" cy="7" r="7" fill="url(#gR)"/><path d="M4.5 4.5l5 5M9.5 4.5l-5 5" stroke="#fff" stroke-width="2" stroke-linecap="round"/></svg></div>
<div class="cell" style="left:932.0px;top:712.4px;width:68.0px;height:34.6px;line-height:34.6px"><svg width="13" height="13" viewBox="0 0 13 13" style="vertical-align:-3px;margin-left:-2px"><path d="M1.5 11.8l1-4 5.8-5.8 3.2 3.2-5.8 5.8z" fill="url(#gP)"/><path d="M8.3 2l1.2-1.2c0.5-0.5 1.1-0.5 1.6 0l1.6 1.6c0.5 0.5 0.5 1.1 0 1.6l-1.2 1.2z" fill="#c8602a"/><path d="M1.5 11.8l1-4 3 3z" fill="#f8e0a8"/></svg></div>
<div class="red" style="left:183.3px;top:266px;width:462.7px;height:28.5px"></div>
<div class="red" style="left:186px;top:331.3px;width:465.6px;height:30.2px"></div>
</body></html>
